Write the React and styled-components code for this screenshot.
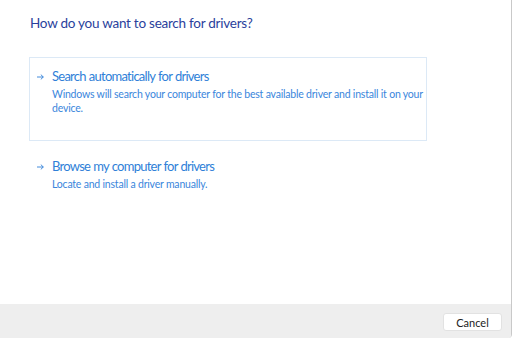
import React from "react";
import styled, { createGlobalStyle } from "styled-components";

const Global = createGlobalStyle`
  html, body { margin: 0; padding: 0; background: #ffffff; }
  body { font-family: Lato, "Open Sans", sans-serif; }
  #root { width: 512px; height: 338px; }
`;

const Window = styled.div`
  box-sizing: border-box;
  width: 512px;
  height: 338px;
  display: flex;
  flex-direction: column;
  background: #ffffff;
  border-right: 1px solid #c9c9c9;
  border-bottom-right-radius: 4px;
  overflow: hidden;
`;

const Content = styled.div`
  flex: 1;
  padding: 13px 0 0 30px;
  display: flex;
  flex-direction: column;
`;

const Heading = styled.h1`
  margin: 0;
  font-weight: 400;
  font-size: 13.5px;
  line-height: 20px;
  letter-spacing: -0.25px;
  color: #2a3f9c;
`;

const Option = styled.div`
  box-sizing: border-box;
  width: 398px;
  height: ${(p) => p.$h}px;
  margin-left: -1px;
  margin-top: ${(p) => p.$mt}px;
  border: 1px solid ${(p) => (p.$outlined ? "#dce9f6" : "transparent")};
  padding: 8px 0 0 6px;
  display: grid;
  grid-template-columns: 16px 1fr;
  align-items: start;
`;

const Arrow = styled.svg`
  margin-top: 8px;
  margin-left: 1px;
`;

const OptionTitle = styled.div`
  font-size: 13px;
  line-height: 20px;
  letter-spacing: -0.75px;
  word-spacing: 0.5px;
  color: #2f7fd8;
`;

const OptionDesc = styled.div`
  font-size: 10.5px;
  line-height: 14px;
  letter-spacing: -0.2px;
  color: #3a86dc;
  margin-top: 1px;
`;

const Footer = styled.div`
  height: 34px;
  background: #eeeeee;
  display: flex;
  justify-content: flex-end;
  align-items: center;
  padding-right: 9px;
`;

const Button = styled.button`
  box-sizing: border-box;
  width: 59px;
  height: 18px;
  background: #ffffff;
  border: 1px solid #e2e2e2;
  border-radius: 3px;
  font-family: Lato, "Open Sans", sans-serif;
  font-size: 11px;
  color: #222222;
  padding: 0;
  margin-top: 2px;
`;

function DriverOption({ title, desc, outlined, h, mt }) {
  return (
    <Option $outlined={outlined} $h={h} $mt={mt}>
      <Arrow width="7" height="6" viewBox="0 0 7 6">
        <path d="M0 3H6.3M3.8 0.6L6.3 3L3.8 5.4" fill="none" stroke="#2f7fd8" strokeWidth="0.9" />
      </Arrow>
      <div>
        <OptionTitle>{title}</OptionTitle>
        <OptionDesc>{desc}</OptionDesc>
      </div>
    </Option>
  );
}

export default function App() {
  return (
    <>
      <Global />
      <Window>
        <Content>
          <Heading>How do you want to search for drivers?</Heading>
          <DriverOption
            outlined
            h={84}
            mt={24}
            title="Search automatically for drivers"
            desc="Windows will search your computer for the best available driver and install it on your device."
          />
          <DriverOption
            h={60}
            mt={6}
            title="Browse my computer for drivers"
            desc="Locate and install a driver manually."
          />
        </Content>
        <Footer>
          <Button>Cancel</Button>
        </Footer>
      </Window>
    </>
  );
}
